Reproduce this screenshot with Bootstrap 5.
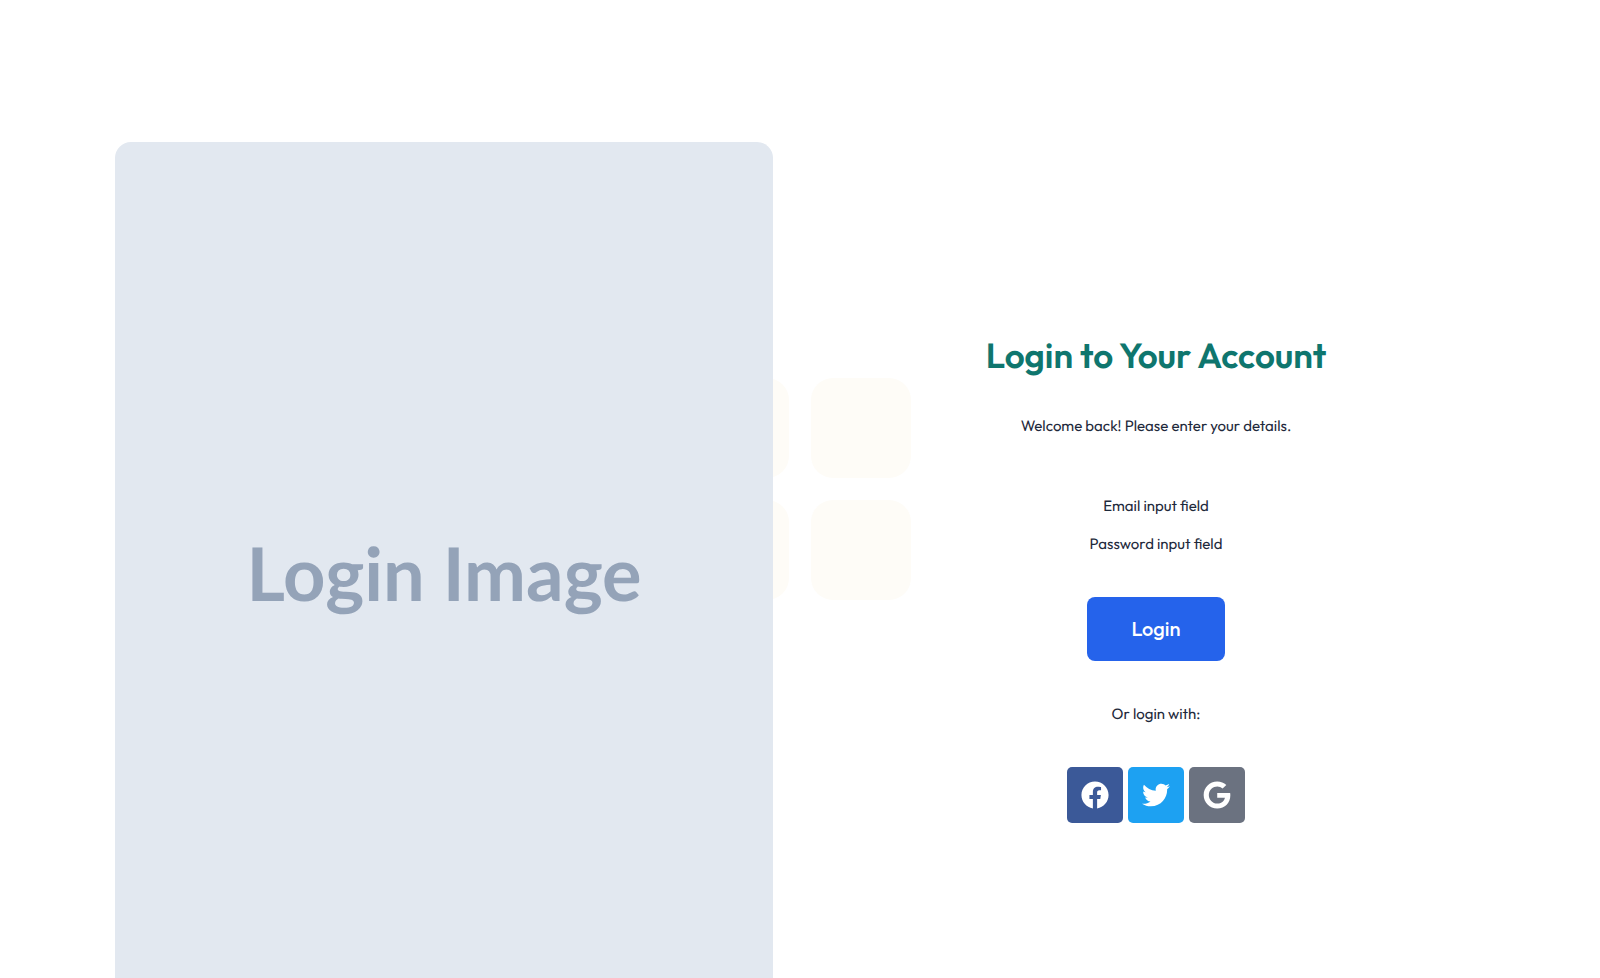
<!DOCTYPE html>
<html lang="en">
<head>
<meta charset="utf-8">
<meta name="viewport" content="width=device-width, initial-scale=1">
<title>Login</title>
<link href="https://cdn.jsdelivr.net/npm/bootstrap@5.3.0/dist/css/bootstrap.min.css" rel="stylesheet">
<style>
  body { font-family: Outfit, Lato, sans-serif; font-size: 15px; line-height: 24px; font-weight: 400; color: #1e293b; text-rendering: geometricPrecision; }
  .login-page { height: 100vh; padding-top: 142px; }
  .login-grid { max-width: 1370px; }
  .login-grid > .row { --bs-gutter-x: 54px; }
  .login-image { aspect-ratio: 658 / 862; border-radius: 16px; background: #e2e8f0; color: #94a3b8; font: 700 74px/88px Lato, sans-serif; }
  .login-form { padding-top: 11px; }
  .login-title { font-size: 35px; line-height: 44px; font-weight: 600; color: #0f766e; }
  .btn-login { width: 138px; height: 64px; border-radius: 8px; background: #2563eb; color: #fff; font-size: 20px; font-weight: 500; }
  .btn-login:hover { background: #1d4ed8; color: #fff; }
  .btn-social { width: 56px; height: 56px; border-radius: 5px; color: #fff; }
  .btn-social svg { width: 28px; height: 28px; fill: currentColor; }
  .social-row { gap: 5px; }
  .bg-facebook { background: #3b5998; }
  .bg-twitter { background: #1da1f2; }
  .bg-google { background: #6b7280; }
  .tile-grid { display: grid; grid-template-columns: 100px 100px; gap: 22px; z-index: -1; }
  .tile-grid span { height: 100px; border-radius: 22px; background: #fefcf7; }
  .mb-36 { margin-bottom: 36px; }
  .mb-41 { margin-bottom: 41px; }
  .mb-56 { margin-bottom: 56px; }
  .mb-14 { margin-bottom: 14px; }
</style>
</head>
<body>
<div class="tile-grid position-absolute top-50 start-50 translate-middle" aria-hidden="true">
  <span></span><span></span><span></span><span></span>
</div>
<main class="login-page overflow-hidden">
  <div class="login-grid mx-auto">
    <div class="row align-items-center">
      <div class="col-6">
        <div class="login-image d-flex align-items-center justify-content-center">Login Image</div>
      </div>
      <div class="col-6">
        <form class="login-form d-flex flex-column align-items-center text-center">
          <h1 class="login-title mb-36">Login to Your Account</h1>
          <p class="mb-56">Welcome back! Please enter your details.</p>
          <p class="mb-14">Email input field</p>
          <p class="mb-41">Password input field</p>
          <button type="button" class="btn btn-login border-0 mb-41">Login</button>
          <p class="mb-41">Or login with:</p>
          <div class="social-row d-flex">
            <a href="#" class="btn btn-social bg-facebook border-0 p-0 d-flex align-items-center justify-content-center" aria-label="Facebook">
              <svg viewBox="0 0 512 512"><path d="M504 256C504 119 393 8 256 8S8 119 8 256c0 123.78 90.69 226.38 209.25 245V327.69h-63V256h63v-54.64c0-62.15 37-96.48 93.67-96.48 27.14 0 55.52 4.84 55.52 4.84v61h-31.28c-30.8 0-40.41 19.12-40.41 38.73V256h68.78l-11 71.69h-57.78V501C413.31 482.38 504 379.78 504 256z"/></svg>
            </a>
            <a href="#" class="btn btn-social bg-twitter border-0 p-0 d-flex align-items-center justify-content-center" aria-label="Twitter">
              <svg viewBox="0 0 512 512"><path d="M459.37 151.716c.325 4.548.325 9.097.325 13.645 0 138.72-105.583 298.558-298.558 298.558-59.452 0-114.68-17.219-161.137-47.106 8.447.974 16.568 1.299 25.34 1.299 49.055 0 94.213-16.568 130.274-44.832-46.132-.975-84.792-31.188-98.112-72.772 6.498.974 12.995 1.624 19.818 1.624 9.421 0 18.843-1.3 27.614-3.573-48.081-9.747-84.143-51.98-84.143-102.985v-1.299c13.969 7.797 30.214 12.67 47.431 13.319-28.264-18.843-46.781-51.005-46.781-87.391 0-19.492 5.197-37.36 14.294-52.954 51.655 63.675 129.3 105.258 216.365 109.807-1.624-7.797-2.599-15.918-2.599-24.04 0-57.828 46.782-104.934 104.934-104.934 30.213 0 57.502 12.67 76.67 33.137 23.715-4.548 46.456-13.32 66.599-25.34-7.798 24.366-24.366 44.833-46.132 57.827 21.117-2.273 41.584-8.122 60.426-16.243-14.292 20.791-32.161 39.308-52.628 54.253z"/></svg>
            </a>
            <a href="#" class="btn btn-social bg-google border-0 p-0 d-flex align-items-center justify-content-center" aria-label="Google">
              <svg viewBox="0 0 488 512"><path d="M488 261.8C488 403.3 391.1 504 248 504 110.8 504 0 393.2 0 256S110.8 8 248 8c66.8 0 123 24.5 166.3 64.9l-67.5 64.9C258.5 52.6 94.3 116.6 94.3 256c0 86.5 69.1 156.6 153.7 156.6 98.2 0 135-70.4 140.8-106.9H248v-85.3h236.1c2.3 12.7 3.9 24.9 3.9 41.4z"/></svg>
            </a>
          </div>
        </form>
      </div>
    </div>
  </div>
</main>
<script src="https://cdn.jsdelivr.net/npm/bootstrap@5.3.0/dist/js/bootstrap.bundle.min.js"></script>
</body>
</html>
